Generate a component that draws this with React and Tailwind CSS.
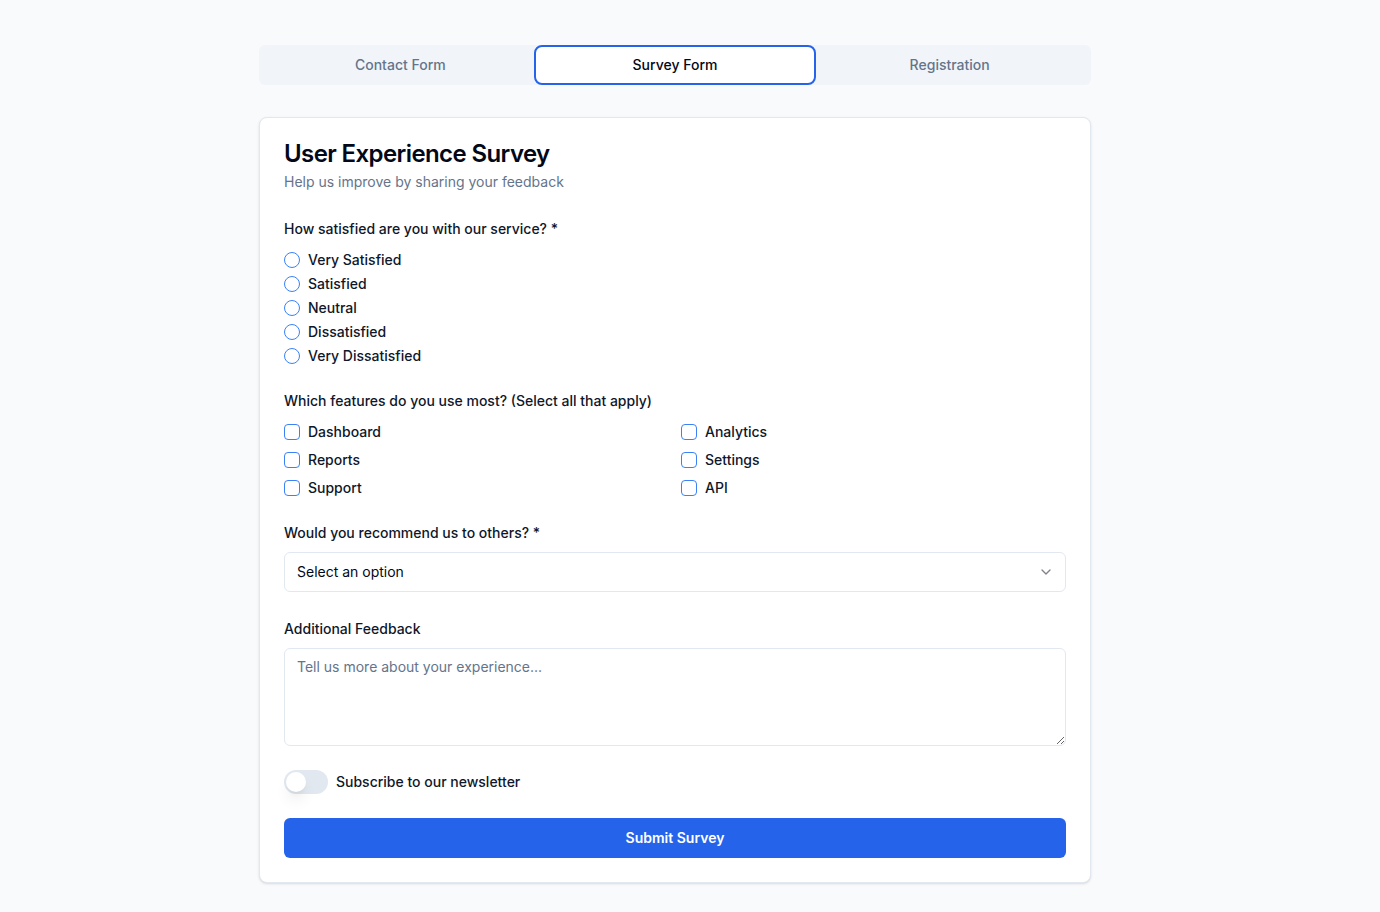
import { useState } from "react";
import { ChevronDown } from "lucide-react";

const satisfaccion = ["Very Satisfied", "Satisfied", "Neutral", "Dissatisfied", "Very Dissatisfied"];
const funciones = ["Dashboard", "Analytics", "Reports", "Settings", "Support", "API"];
const tabs = ["Contact Form", "Survey Form", "Registration"];

export default function App() {
  const [tab, setTab] = useState("Survey Form");
  const [nivel, setNivel] = useState("");
  const [marcadas, setMarcadas] = useState([]);
  const [recomienda, setRecomienda] = useState("");
  const [boletin, setBoletin] = useState(false);

  function alternar(f) {
    setMarcadas((prev) => (prev.includes(f) ? prev.filter((x) => x !== f) : [...prev, f]));
  }

  return (
    <div className="min-h-screen bg-[#f8fafc] pt-[45px] pb-10 font-['Inter',sans-serif] text-[#0f172a]">
      <div className="ml-[259px] w-[832px]">
        <div className="grid h-10 grid-cols-3 rounded-md bg-[#f1f5f9] px-1">
          {tabs.map((t) => (
            <button
              key={t}
              onClick={() => setTab(t)}
              className={
                t === tab
                  ? "-mx-1 rounded-lg border-2 border-[#2563eb] bg-white text-sm font-medium text-[#020817]"
                  : "text-sm font-medium text-[#64748b]"
              }
            >
              {t}
            </button>
          ))}
        </div>

        <div className="mt-8 rounded-lg border border-[#e2e8f0] bg-white px-6 pt-[21px] pb-6 shadow-sm">
          <h1 className="text-2xl leading-[30px] font-semibold tracking-tight text-[#020817]">User Experience Survey</h1>
          <p className="mt-[3px] text-sm text-[#64748b]">Help us improve by sharing your feedback</p>

          <form className="mt-[27px] flex flex-col" onSubmit={(e) => e.preventDefault()}>
            <div>
              <p className="mb-[9px] text-sm font-medium">How satisfied are you with our service? *</p>
              <div className="flex flex-col">
                {satisfaccion.map((s) => (
                  <label key={s} className="flex h-6 items-center gap-2 text-sm font-medium">
                    <span
                      onClick={() => setNivel(s)}
                      className="flex h-4 w-4 items-center justify-center rounded-full border-[1.5px] border-[#3b82f6]"
                    >
                      {nivel === s && <span className="h-2 w-2 rounded-full bg-[#2563eb]" />}
                    </span>
                    {s}
                  </label>
                ))}
              </div>
            </div>

            <div className="mt-[23px]">
              <p className="mb-[9px] text-sm font-medium">Which features do you use most? (Select all that apply)</p>
              <div className="grid grid-cols-2 gap-x-3 gap-y-1">
                {funciones.map((f) => (
                  <label key={f} className="flex h-6 items-center gap-2 text-sm font-medium" onClick={() => alternar(f)}>
                    <span
                      className={
                        marcadas.includes(f)
                          ? "h-4 w-4 rounded-[4px] border-[1.5px] border-[#2563eb] bg-[#2563eb]"
                          : "h-4 w-4 rounded-[4px] border-[1.5px] border-[#3b82f6]"
                      }
                    />
                    {f}
                  </label>
                ))}
              </div>
            </div>

            <div className="mt-[23px]">
              <p className="mb-[9px] text-sm font-medium">Would you recommend us to others? *</p>
              <div className="relative">
                <select
                  value={recomienda}
                  onChange={(e) => setRecomienda(e.target.value)}
                  className="h-10 w-full appearance-none rounded-md border border-[#e2e8f0] bg-white px-3 text-sm text-[#020817] outline-none"
                >
                  <option value="">Select an option</option>
                  <option value="yes">Yes</option>
                  <option value="maybe">Maybe</option>
                  <option value="no">No</option>
                </select>
                <ChevronDown className="pointer-events-none absolute top-3 right-3 h-4 w-4 text-[#020817] opacity-50" />
              </div>
            </div>

            <div className="mt-[27px]">
              <p className="mb-[9px] text-sm font-medium">Additional Feedback</p>
              <textarea
                placeholder="Tell us more about your experience..."
                className="block h-[98px] w-full rounded-md border border-[#e2e8f0] px-3 py-2 text-sm outline-none placeholder:text-[#64748b]"
              />
            </div>

            <div className="mt-6 flex items-center gap-2">
              <button
                type="button"
                onClick={() => setBoletin(!boletin)}
                className={
                  boletin
                    ? "flex h-6 w-11 items-center rounded-full bg-[#2563eb] p-0.5"
                    : "flex h-6 w-11 items-center rounded-full bg-[#e2e8f0] p-0.5"
                }
              >
                <span
                  className={
                    boletin
                      ? "h-5 w-5 translate-x-5 rounded-full bg-white shadow-lg"
                      : "h-5 w-5 rounded-full bg-white shadow-lg"
                  }
                />
              </button>
              <span className="text-sm font-medium">Subscribe to our newsletter</span>
            </div>

            <button
              type="submit"
              className="mt-6 h-10 w-full rounded-md bg-[#2563eb] text-sm font-semibold text-white"
            >
              Submit Survey
            </button>
          </form>
        </div>
      </div>
    </div>
  );
}
